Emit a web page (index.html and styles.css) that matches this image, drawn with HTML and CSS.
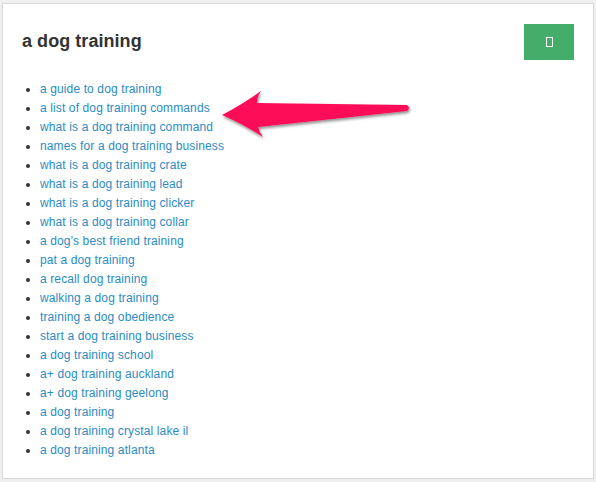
FILE: index.html
```html
<!DOCTYPE html>
<html>
<head>
<meta charset="utf-8">
<link rel="stylesheet" href="styles.css">
</head>
<body>
<div class="card">
  <div class="header">
    <h2 class="title">a dog training</h2>
    <button class="btn" type="button"><span class="tofu"></span></button>
  </div>
  <ul class="list">
    <li><a href="#">a guide to dog training</a></li>
    <li><a href="#">a list of dog training commands</a></li>
    <li><a href="#">what is a dog training command</a></li>
    <li><a href="#">names for a dog training business</a></li>
    <li><a href="#">what is a dog training crate</a></li>
    <li><a href="#">what is a dog training lead</a></li>
    <li><a href="#">what is a dog training clicker</a></li>
    <li><a href="#">what is a dog training collar</a></li>
    <li><a href="#">a dog's best friend training</a></li>
    <li><a href="#">pat a dog training</a></li>
    <li><a href="#">a recall dog training</a></li>
    <li><a href="#">walking a dog training</a></li>
    <li><a href="#">training a dog obedience</a></li>
    <li><a href="#">start a dog training business</a></li>
    <li><a href="#">a dog training school</a></li>
    <li><a href="#">a+ dog training auckland</a></li>
    <li><a href="#">a+ dog training geelong</a></li>
    <li><a href="#">a dog training</a></li>
    <li><a href="#">a dog training crystal lake il</a></li>
    <li><a href="#">a dog training atlanta</a></li>
  </ul>
  <svg class="arrow" width="596" height="482" viewBox="0 0 596 482">
    <defs>
      <filter id="sh" x="-10%" y="-30%" width="120%" height="160%">
        <feDropShadow dx="1" dy="2" stdDeviation="1.5" flood-color="#000" flood-opacity="0.45"/>
      </filter>
    </defs>
    <path d="M222,115 Q243,104 261,91 Q257,97 257,103 L407,105 Q411,108 407,111 L258,127 Q259,132 263,137 Q243,124 222,115 Z" fill="#fd1158" filter="url(#sh)"/>
  </svg>
</div>
</body>
</html>
```
FILE: styles.css
```css
html, body {
  margin: 0;
  padding: 0;
}
body {
  background: #efefef;
  width: 596px;
  height: 482px;
  padding: 3px 2px 0 2px;
  box-sizing: border-box;
  font-family: "Liberation Sans", Arial, sans-serif;
}
.card {
  position: relative;
  width: 592px;
  height: 476px;
  box-sizing: border-box;
  background: #fff;
  border: 1px solid #d9d9d9;
  padding: 20px 19px 0 19px;
}
.header {
  display: flex;
  justify-content: space-between;
  align-items: flex-start;
}
.title {
  margin: 7px 0 0 0;
  font-size: 18px;
  line-height: 21px;
  font-weight: bold;
  color: #333;
  letter-spacing: 0.05px;
}
.btn {
  width: 50px;
  height: 36px;
  border: none;
  background: #45ad6a;
  display: flex;
  align-items: center;
  justify-content: center;
  padding: 0;
  margin: 0;
}
.tofu {
  display: block;
  width: 5px;
  height: 8px;
  border: 1px solid #fff;
}
.list {
  margin: 20px 0 0 0;
  padding-left: 18px;
  font-size: 12px;
  line-height: 19px;
  color: #333;
  letter-spacing: 0.12px;
}
.list a {
  color: #2a8bc4;
  text-decoration: none;
}
.arrow {
  position: absolute;
  left: -3px;
  top: -4px;
  pointer-events: none;
}
```
